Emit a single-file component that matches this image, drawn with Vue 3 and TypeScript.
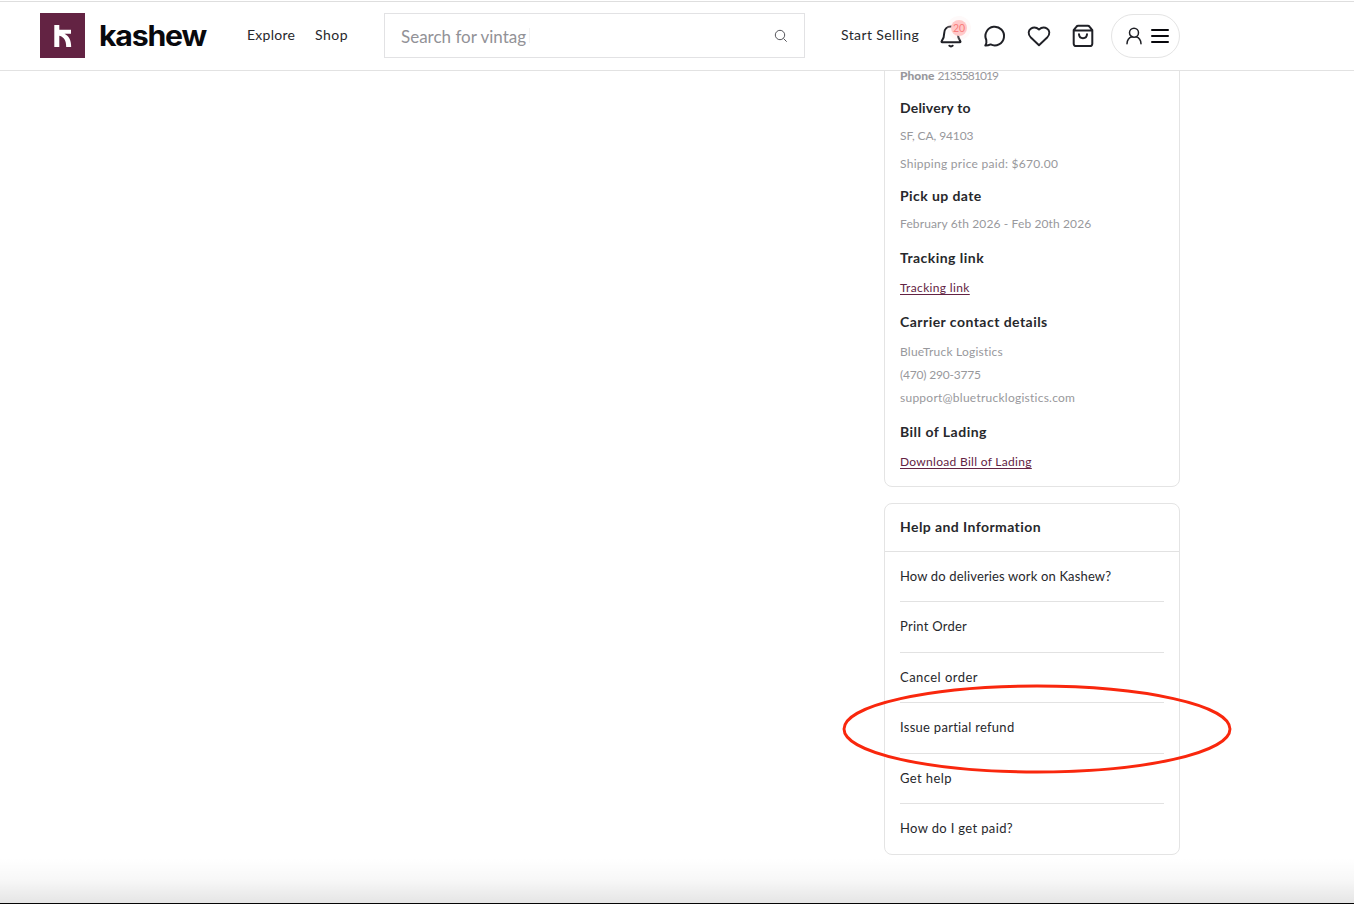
<script setup lang="ts">
interface Row {
  kind: 'title' | 'muted' | 'link'
  text: string
  gap: 'xs' | 'sm' | 'md' | 'lg' | 'xl'
  fit: string
}

const details: Row[] = [
  { kind: 'title', text: 'Delivery to', gap: 'lg', fit: 'a' },
  { kind: 'muted', text: 'SF, CA, 94103', gap: 'sm', fit: 'b' },
  { kind: 'muted', text: 'Shipping price paid: $670.00', gap: 'sm', fit: 'c' },
  { kind: 'title', text: 'Pick up date', gap: 'lg', fit: 'd' },
  { kind: 'muted', text: 'February 6th 2026 - Feb 20th 2026', gap: 'sm', fit: 'e' },
  { kind: 'title', text: 'Tracking link', gap: 'xl', fit: 'f' },
  { kind: 'link', text: 'Tracking link', gap: 'md', fit: 'g' },
  { kind: 'title', text: 'Carrier contact details', gap: 'xl', fit: 'h' },
  { kind: 'muted', text: 'BlueTruck Logistics', gap: 'md', fit: 'i' },
  { kind: 'muted', text: '(470) 290-3775', gap: 'xs', fit: 'j' },
  { kind: 'muted', text: 'support@bluetrucklogistics.com', gap: 'xs', fit: 'k' },
  { kind: 'title', text: 'Bill of Lading', gap: 'xl', fit: 'l' },
  { kind: 'link', text: 'Download Bill of Lading', gap: 'md', fit: 'm' },
]

const help: string[] = [
  'How do deliveries work on Kashew?',
  'Print Order',
  'Cancel order',
  'Issue partial refund',
  'Get help',
  'How do I get paid?',
]
</script>

<template>
  <div class="page">
    <header class="bar">
      <a class="brand">
        <svg class="mark" width="45" height="45" viewBox="0 0 45 45">
          <rect width="45" height="45" fill="#632343" />
          <path d="M14.300 12h5v4.800H31v3.900h-6.500c4.300 2.100 6.700 6.300 6.700 13.300h-5c0-6.400-2-10-6.900-11.300V34h-5z" fill="#fff" />
        </svg>
        <span class="word">kashew</span>
      </a>
      <nav class="nav">
        <a class="explore">Explore</a>
        <a class="shop">Shop</a>
      </nav>
      <div class="search">
        <span class="query">Search for vintag</span><i class="caret"></i>
        <svg class="glass" width="14" height="14" viewBox="0 0 14 14" fill="none" stroke="#55555b" stroke-width="1">
          <circle cx="6" cy="6" r="4.700" /><path d="M9.500 9.500l3.200 3.200" />
        </svg>
      </div>
      <a class="sell">Start Selling</a>
      <div class="tools">
        <span class="bell">
          <svg width="24" height="26" viewBox="0 0 24 26" fill="none" stroke="#1f2026" stroke-width="2" stroke-linecap="round" stroke-linejoin="round">
            <path d="M12 3.500c-4.200 0-6.800 2.800-6.800 6.700 0 4.500-1 6.100-2.500 8-.4.600-.2 1 .4 1h17.800c.6 0 .8-.4.400-1-1.500-1.900-2.500-3.500-2.500-8 0-3.900-2.600-6.700-6.800-6.700z" />
            <path d="M10.300 22.700c.9 1 2.500 1 3.400 0" />
          </svg>
          <b class="count">20</b>
        </span>
        <svg class="chat" width="24" height="24" viewBox="0 0 24 24" fill="none" stroke="#1f2026" stroke-width="2" stroke-linejoin="round">
          <path d="M2.300 21.500c1.200-1.800 1.500-3.200 1-5.500a9.300 9.300 0 1 1 4.300 4.400c-1.700.8-3.400 1.200-5.300 1.100z" />
        </svg>
        <svg class="heart" width="24" height="24" viewBox="0 0 24 24" fill="none" stroke="#1f2026" stroke-width="1.900" stroke-linejoin="round">
          <path d="M12 21.300L3.600 13.200C.8 10.300 1.200 6.200 3.900 4.600 6.300 3.100 9.700 3.400 12 5.500c2.300-2.100 5.700-2.400 8.100-.9 2.700 1.600 3.100 5.700.3 8.600z" />
        </svg>
        <svg class="bag" width="22" height="24" viewBox="0 0 22 24" fill="none" stroke="#1f2026" stroke-width="2" stroke-linejoin="round" stroke-linecap="round">
          <path d="M1.700 6.200L4.500 2.600c.4-.6 1-.9 1.700-.9h9.600c.7 0 1.300.3 1.700.9l2.800 3.600v13.600a2.300 2.300 0 0 1-2.300 2.300H4a2.300 2.300 0 0 1-2.300-2.300zM1.700 6.400h18.600M7 10.200c.3 5.300 7.700 5.300 8 0" />
        </svg>
        <div class="account">
          <svg width="16" height="18" viewBox="0 0 16 18" fill="none" stroke="#1f2026" stroke-width="1.500" stroke-linecap="round">
            <circle cx="8" cy="5.700" r="4.500" /><path d="M1 16.700c.2-4.200 2-6.200 4.900-7M15 16.700c-.2-4.200-2-6.200-4.900-7" />
          </svg>
          <svg width="18" height="14" viewBox="0 0 18 14" stroke="#08080c" stroke-width="2" stroke-linecap="round">
            <path d="M1 1h16M1 7h16M1 13h16" />
          </svg>
        </div>
      </div>
    </header>

    <main class="content">
      <section class="card order">
        <p class="row muted phone"><b>Phone</b> <span>2135581019</span></p>
        <p v-for="r in details" :key="r.fit" class="row" :class="[r.kind, r.gap, 'fit-' + r.fit]">{{ r.text }}</p>
      </section>
      <section class="card help">
        <h2>Help and Information</h2>
        <ul>
          <li v-for="(h, i) in help" :key="h" :class="'item-' + i">{{ h }}</li>
        </ul>
        <svg class="ring" width="392" height="92" viewBox="0 0 392 92" fill="none" stroke="#f9270d" stroke-width="2.900">
          <ellipse cx="196" cy="46" rx="193" ry="43" />
        </svg>
      </section>
    </main>
    <div class="fade"></div>
  </div>
</template>

<style>
body {
  margin: 0;
  background: #fff;
}
</style>

<style scoped>
.page {
  position: relative;
  height: 904px;
  overflow: hidden;
  background: #fff;
  color: #27282c;
  font-family: Lato, "Liberation Sans", sans-serif;
  font-variant-ligatures: none;
}
.bar {
  position: relative;
  z-index: 2;
  box-sizing: border-box;
  height: 70px;
  padding: 11px 0 0 40px;
  margin-top: 1px;
  border-top: 1px solid #dedede;
  border-bottom: 1px solid #e2e2e2;
  background: #fff;
  display: flex;
  align-items: flex-start;
}
.brand {
  display: flex;
  width: 207px;
}
.mark {
  display: block;
}
.word {
  margin-left: 14px;
  font: 700 28px/47px Inter, sans-serif;
  letter-spacing: -1.1px;
  color: #09090d;
  transform: scaleX(1.08);
  transform-origin: 0 50%;
}
.nav {
  display: flex;
  width: 137px;
  gap: 20px;
  font-size: 14px;
  line-height: 43px;
}
.nav a {
  width: 48px;
  white-space: nowrap;
}
.explore {
  letter-spacing: 0.25px;
}
.shop {
  letter-spacing: 0.5px;
}
.search {
  box-sizing: border-box;
  width: 421px;
  height: 45px;
  padding: 0 16px;
  border: 1px solid #e2e2e4;
  display: flex;
  align-items: center;
}
.query {
  padding-top: 2px;
  font-size: 17px;
  line-height: 22px;
  color: #929297;
}
.caret {
  width: 1px;
  height: 15px;
  margin-left: 3px;
  background: #f3f3f3;
}
.glass {
  margin-left: auto;
}
.sell {
  width: 99px;
  margin-left: 36px;
  font-size: 14px;
  line-height: 43px;
  letter-spacing: 0.4px;
  white-space: nowrap;
}
.tools {
  display: flex;
  align-items: center;
  height: 45px;
}
.tools svg {
  display: block;
}
.bell {
  position: relative;
  width: 24px;
  margin-left: -1px;
}
.count {
  position: absolute;
  left: 12px;
  top: -3px;
  width: 16px;
  height: 16px;
  border-radius: 50%;
  background: #ffc8c8;
  box-shadow: 0 0 0 4px rgba(250, 225, 225, 0.2);
  color: #f87c7c;
  font-size: 10.5px;
  font-weight: 400;
  line-height: 16px;
  text-align: center;
}
.chat {
  margin-left: 20px;
}
.heart {
  margin-left: 20px;
}
.bag {
  margin-left: 21px;
}
.account {
  box-sizing: border-box;
  width: 69px;
  height: 44px;
  margin-left: 17px;
  padding-left: 14px;
  border: 1px solid #e4e4e4;
  border-radius: 22px;
  display: flex;
  align-items: center;
  gap: 9px;
}
.content {
  width: 296px;
  margin-left: 884px;
}
.card {
  box-sizing: border-box;
  border: 1px solid #e4e4e4;
  border-radius: 8px;
}
.order {
  margin-top: -15px;
  padding: 9px 15px 14px;
}
.row {
  height: 20px;
  margin: 0;
  line-height: 20px;
  font-size: 12px;
  white-space: nowrap;
}
.row.xs { margin-top: 3px; }
.row.sm { margin-top: 8px; }
.row.md { margin-top: 10px; }
.row.lg { margin-top: 12px; }
.row.xl { margin-top: 14px; }
.title {
  font-size: 14px;
  font-weight: 700;
}
.muted {
  color: #98989c;
}
.link {
  color: #632343;
  text-decoration: underline;
  text-underline-offset: 2px;
}
.phone b { font-weight: 900; }
.phone span { letter-spacing: -0.9px; }
.fit-a { letter-spacing: 0.2px; }
.fit-b { letter-spacing: -0.1px; }
.fit-c { letter-spacing: 0.28px; }
.fit-d { letter-spacing: 0.42px; }
.fit-e { letter-spacing: 0.12px; }
.fit-f { letter-spacing: 0.46px; }
.fit-g { letter-spacing: 0.35px; }
.fit-h { letter-spacing: 0.46px; }
.fit-i { letter-spacing: 0.22px; }
.fit-j { letter-spacing: -0.2px; }
.fit-k { letter-spacing: 0.25px; }
.fit-l { letter-spacing: 0.48px; }
.fit-m { letter-spacing: 0.3px; }
.help {
  position: relative;
  height: 352px;
  margin-top: 16px;
}
.help h2 {
  box-sizing: border-box;
  height: 48px;
  margin: 0;
  padding-left: 15px;
  border-bottom: 1px solid #e2e2e2;
  font-size: 14px;
  font-weight: 700;
  line-height: 45px;
  letter-spacing: 0.42px;
}
.help ul {
  margin: 0 15px;
  padding: 0;
  list-style: none;
}
.help li {
  box-sizing: border-box;
  height: 50.4px;
  border-bottom: 1px solid #e2e2e2;
  font-size: 13px;
  line-height: 48px;
}
.help li:last-child {
  border-bottom: 0;
}
.item-0 { letter-spacing: 0.15px; }
.item-1 { letter-spacing: 0.25px; }
.item-2 { letter-spacing: 0.45px; }
.item-3 { letter-spacing: 0.28px; }
.item-4 { letter-spacing: 0.4px; }
.item-5 { letter-spacing: 0.35px; }
.ring {
  position: absolute;
  left: -44px;
  top: 179px;
}
.fade {
  position: absolute;
  left: 0;
  right: 0;
  bottom: 0;
  box-sizing: border-box;
  height: 46px;
  border-bottom: 1px solid #050505;
  background: linear-gradient(rgba(0, 0, 0, 0), rgba(0, 0, 0, 0.03) 50%, rgba(0, 0, 0, 0.1));
}
</style>
